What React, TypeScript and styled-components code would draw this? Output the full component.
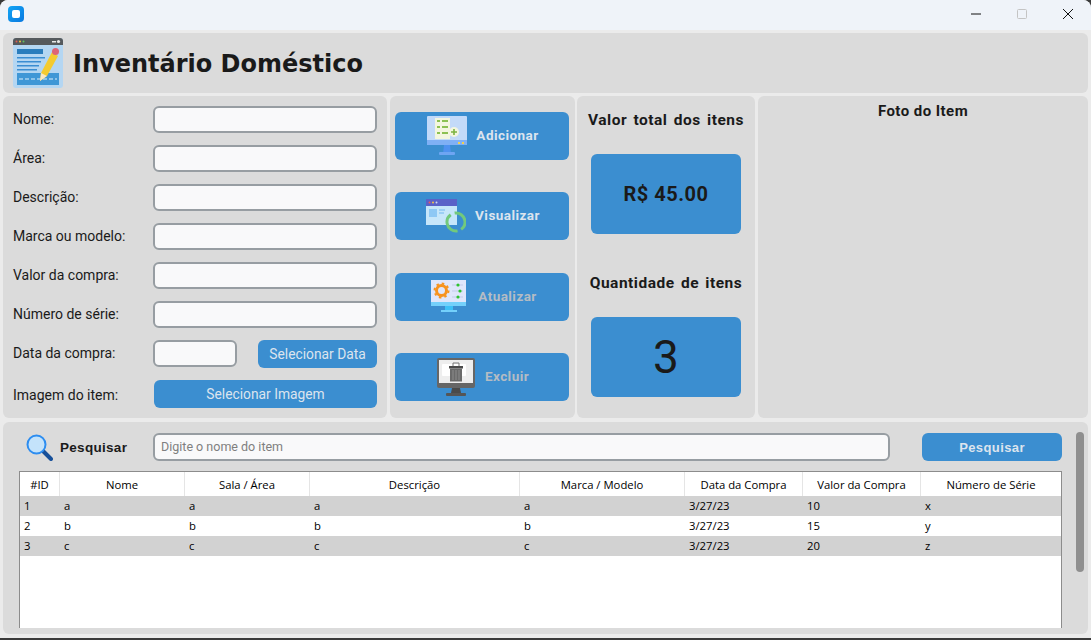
import styled, { createGlobalStyle } from 'styled-components'

const GlobalStyle = createGlobalStyle`
  html, body {
    margin: 0;
    height: 100%;
    overflow: hidden;
    background: #3a3a3a;
  }
  * {
    box-sizing: border-box;
  }
`

const Window = styled.div`
  width: 1091px;
  height: 638px;
  background: #ebebeb;
  border-radius: 8px 8px 0 0;
  display: flex;
  flex-direction: column;
  overflow: hidden;
`
const TitleBar = styled.div`
  height: 30px;
  flex: none;
  background: #eff3f9;
  display: flex;
  align-items: center;
  padding: 0 0 2px 8px;
`
const AppIcon = styled.div`
  width: 16px;
  height: 16px;
  border-radius: 4px;
  background: linear-gradient(135deg, #12a5f4, #0a78e0);
  display: flex;
  align-items: center;
  justify-content: center;
  &::after {
    content: '';
    width: 8px;
    height: 8px;
    border-radius: 2px;
    background: #fff;
  }
`
const WindowControls = styled.div`
  margin-left: auto;
  display: flex;
  height: 100%;
`
const WindowControl = styled.div`
  width: 46px;
  height: 100%;
  display: flex;
  align-items: center;
  justify-content: center;
`
const Content = styled.div`
  flex: 1;
  min-height: 0;
  padding: 3px 3px 4px;
  display: flex;
  flex-direction: column;
  gap: 3px;
`
const Panel = styled.div`
  background: #dbdbdb;
  border-radius: 6px;
`
const Header = styled(Panel)`
  height: 60px;
  flex: none;
  display: flex;
  align-items: center;
  padding-left: 10px;
  gap: 10px;
`
const Title = styled.h1`
  margin: 0;
  padding-top: 2px;
  font-family: 'DejaVu Sans', sans-serif;
  font-weight: 700;
  font-size: 24px;
  color: #1a1a1a;
`
const Middle = styled.div`
  height: 322px;
  flex: none;
  display: flex;
  gap: 3px;
`
const FormPanel = styled(Panel)`
  width: 384px;
  padding: 10px 10px 0;
  display: flex;
  flex-direction: column;
`
const FieldRow = styled.div`
  height: 26px;
  margin-bottom: 13px;
  display: flex;
  align-items: center;
`
const FieldLabel = styled.label`
  width: 140px;
  flex: none;
  font-family: Roboto, sans-serif;
  font-size: 14px;
  color: #1a1a1a;
`
const ImageLabel = styled(FieldLabel)`
  width: 141px;
  position: relative;
  top: 1px;
`
const TextInput = styled.input<{ $width?: number }>`
  width: ${p => p.$width ?? 224}px;
  height: 27px;
  background: #f9f9fa;
  border: 2px solid #979da2;
  border-radius: 6px;
  outline: none;
  font-family: Roboto, sans-serif;
  font-size: 14px;
  padding: 0 6px;
  &::placeholder {
    color: #7f7f7f;
  }
`
const BlueButton = styled.button<{ $width: number }>`
  width: ${p => p.$width}px;
  height: 28px;
  border: none;
  border-radius: 6px;
  background: #3b8ed0;
  color: #dce4ee;
  font-family: Roboto, sans-serif;
  font-size: 13.8px;
  padding: 0;
`
const DateButton = styled(BlueButton)`
  margin: 2px 0 0 21px;
`
const ImageRow = styled(FieldRow)`
  height: 28px;
  margin-top: 1px;
  margin-bottom: 0;
`
const ActionPanel = styled(Panel)`
  width: 185px;
  padding: 16px 6px 17px 5px;
  display: flex;
  flex-direction: column;
  justify-content: space-between;
`
const ActionButton = styled.button<{ $muted?: boolean; $gap: number; $shift: number }>`
  height: 48px;
  border: none;
  border-radius: 6px;
  background: #3b8ed0;
  color: ${p => (p.$muted ? '#b4bcc4' : '#dce4ee')};
  font-family: Roboto, sans-serif;
  font-weight: 700;
  font-size: 13.5px;
  letter-spacing: 0.45px;
  display: flex;
  align-items: center;
  justify-content: center;
  gap: ${p => p.$gap}px;
  padding: 0 0 0 ${p => p.$shift}px;
`
const ActionLabel = styled.span`
  margin-bottom: 2px;
`
const StatsPanel = styled(Panel)`
  width: 178px;
  margin-left: -1px;
  padding-top: 15px;
  display: flex;
  flex-direction: column;
  align-items: center;
`
const StatTitle = styled.div<{ $space: number }>`
  font-family: Roboto, sans-serif;
  font-weight: 700;
  font-size: 15.5px;
  line-height: 18px;
  letter-spacing: 0.5px;
  word-spacing: 2px;
  color: #1a1a1a;
  white-space: nowrap;
  margin-bottom: ${p => p.$space}px;
`
const StatBox = styled.div<{ $large?: boolean }>`
  width: 150px;
  height: 80px;
  flex: none;
  margin-bottom: 40px;
  border-radius: 6px;
  background: #3b8ed0;
  color: #1a1a1a;
  font-family: Roboto, sans-serif;
  font-weight: ${p => (p.$large ? 400 : 700)};
  font-size: ${p => (p.$large ? 46 : 20)}px;
  letter-spacing: ${p => (p.$large ? 0 : 0.5)}px;
  display: flex;
  align-items: center;
  justify-content: center;
`
const PhotoPanel = styled(Panel)`
  flex: 1;
  padding-top: 7px;
  text-align: center;
  font-family: Roboto, sans-serif;
  font-weight: 700;
  font-size: 15px;
  line-height: 16px;
  letter-spacing: 0.45px;
  color: #1a1a1a;
`
const BottomPanel = styled(Panel)`
  flex: 1;
  min-height: 0;
  margin-top: 1px;
  padding: 11px 0 0 16px;
  position: relative;
  overflow: hidden;
`
const SearchRow = styled.div`
  display: flex;
  align-items: center;
  height: 28px;
  margin-bottom: 10px;
  padding-left: 7px;
`
const SearchLabel = styled.span`
  font-family: 'Liberation Sans', sans-serif;
  font-weight: 700;
  font-size: 13.5px;
  letter-spacing: 0.3px;
  color: #1a1a1a;
  margin-left: 7px;
  width: 93px;
`
const SearchInput = styled(TextInput)`
  height: 28px;
  font-size: 12.5px;
  padding: 0 6px 2px;
`
const SearchButton = styled(BlueButton)`
  margin-left: 32px;
  font-family: 'Liberation Sans', sans-serif;
  font-weight: 700;
  font-size: 13px;
  letter-spacing: 0.4px;
`
const TableFrame = styled.div`
  width: 1043px;
  height: 157px;
  background: #fff;
  border: 1px solid #8c8c8c;
  border-bottom: none;
`
const DataTable = styled.table`
  width: 1041px;
  table-layout: fixed;
  border-collapse: separate;
  border-spacing: 0;
  font-family: 'Open Sans', sans-serif;
  font-size: 11.3px;
  color: #000;
`
const HeadCell = styled.th`
  height: 24px;
  padding: 0;
  font-weight: 400;
  text-align: center;
  border-right: 1px solid #e5e5e5;
  &:last-child {
    border-right: none;
  }
`
const BodyRow = styled.tr<{ $striped: boolean }>`
  background: ${p => (p.$striped ? '#d2d2d2' : '#fff')};
`
const BodyCell = styled.td`
  height: 20px;
  padding: 0 0 0 4px;
  line-height: 20px;
`
const ScrollThumb = styled.div`
  position: absolute;
  left: 1073px;
  top: 10px;
  width: 8px;
  height: 140px;
  border-radius: 4px;
  background: #8f8f8f;
`

const NoteIcon = () => (
  <svg width="50" height="50" viewBox="0 0 50 50">
    <rect width="50" height="50" rx="3" fill="#b4d6f2" />
    <path d="M0 7V3a3 3 0 0 1 3-3h44a3 3 0 0 1 3 3v4z" fill="#55595c" />
    <circle cx="3.5" cy="3.5" r="1" fill="#e05a4f" />
    <circle cx="7" cy="3.5" r="1" fill="#f3c63a" />
    <circle cx="10.5" cy="3.5" r="1" fill="#5fc15f" />
    <rect x="39" y="3" width="4" height="1.5" fill="#e8e8e8" />
    <circle cx="45.5" cy="3.5" r="1.6" fill="#e8e8e8" />
    <rect x="4" y="11" width="26" height="5" fill="#2a7dbd" />
    <rect x="4" y="19" width="28" height="1.5" fill="#3a8dd2" />
    <rect x="4" y="23" width="24" height="1.5" fill="#3a8dd2" />
    <rect x="4" y="27" width="22" height="1.5" fill="#3a8dd2" />
    <rect x="4" y="31" width="20" height="1.5" fill="#3a8dd2" />
    <rect x="4" y="35" width="42" height="12" fill="#3f97d6" />
    <path d="M6 41h38" stroke="#a7d2f0" strokeWidth="1.5" strokeDasharray="4 2" />
    <path d="M27 43l1-8L39 14l6 4L34 38z" fill="#f4cb2f" />
    <path d="M27 43l1-8 6 3z" fill="#f9e7c3" />
    <circle cx="42.5" cy="13.5" r="3.5" fill="#dd6477" />
  </svg>
)

const AddIcon = () => (
  <svg width="40" height="40" viewBox="0 0 40 40">
    <rect x="0" y="0" width="40" height="29" rx="1" fill="#c3daf9" />
    <rect x="0" y="24" width="40" height="5" fill="#7fb0f5" />
    <rect x="8" y="2" width="15" height="21" fill="#f3f6df" />
    <path d="M10 5h3M15 5h6M10 11h3M15 11h6M10 17h3M15 17h6" stroke="#8cc152" strokeWidth="2" />
    <circle cx="27" cy="16" r="5" fill="#f3f6df" />
    <path d="M27 13v6M24 16h6" stroke="#7cb342" strokeWidth="1.6" />
    <rect x="31" y="26" width="2" height="2" fill="#f2d04e" />
    <rect x="35" y="26" width="2" height="2" fill="#f2d04e" />
    <path d="M17 29h6l1 9h-8z" fill="#4f92f0" />
    <rect x="12" y="36" width="16" height="3" rx="1" fill="#6ea5f2" />
  </svg>
)

const ViewIcon = () => (
  <svg width="40" height="34" viewBox="0 0 40 34">
    <rect x="0" y="0" width="31" height="26" fill="#c6e6fa" />
    <rect x="0" y="0" width="31" height="7" fill="#5a62c8" />
    <circle cx="3.5" cy="3.5" r="1" fill="#ee5a5a" />
    <circle cx="7" cy="3.5" r="1" fill="#f6c344" />
    <circle cx="10.5" cy="3.5" r="1" fill="#cfd8f5" />
    <rect x="3" y="10" width="8" height="8" fill="#8ec8f4" />
    <path d="M13 11h6M13 14h5" stroke="#8ec8f4" strokeWidth="1.3" />
    <circle cx="30" cy="23" r="9" fill="none" stroke="#72c97c" strokeWidth="3" strokeDasharray="24 4.3" transform="rotate(80 30 23)" />
  </svg>
)

const UpdateIcon = () => (
  <svg width="38" height="33" viewBox="0 0 38 33">
    <rect x="0" y="0" width="35" height="26" fill="#dfe6fb" />
    <rect x="0" y="22" width="35" height="4" fill="#74d0fb" />
    <circle cx="10.5" cy="10.5" r="5" fill="none" stroke="#f7931e" strokeWidth="3" />
    <circle cx="10.5" cy="10.5" r="7" fill="none" stroke="#f7931e" strokeWidth="2" strokeDasharray="2.5 3" />
    <path d="M21 5h11M21 11h11M21 17h11" stroke="#c3cbea" strokeWidth="1" />
    <circle cx="27" cy="5" r="1.6" fill="#2fc42f" />
    <circle cx="29" cy="11" r="1.6" fill="#2fc42f" />
    <circle cx="27" cy="17" r="1.6" fill="#2fc42f" />
    <rect x="14" y="26" width="8" height="5" fill="#3dc0f7" />
    <rect x="10" y="30" width="16" height="2" fill="#74d0fb" />
  </svg>
)

const DeleteIcon = () => (
  <svg width="38" height="38" viewBox="0 0 38 38">
    <rect x="0" y="0" width="38" height="30" rx="2" fill="#666" />
    <rect x="2" y="2" width="34" height="23" fill="#eee" />
    <rect x="5" y="6" width="24" height="12" rx="1" fill="#fff" />
    <rect x="12" y="8" width="14" height="2.5" fill="#4a4a4a" />
    <path d="M16 8V5h6v3" fill="none" stroke="#777" strokeWidth="1" />
    <path d="M13 10.5h12v13H13z" fill="#6a6a6a" />
    <path d="M16 12v10M19 12v10M22 12v10" stroke="#8c8c8c" strokeWidth="1" />
    <path d="M15 30h8l1 5h-10z" fill="#4a4a4a" />
    <rect x="9" y="35" width="20" height="3" rx="1" fill="#555" />
  </svg>
)

const SearchIcon = () => (
  <svg width="27" height="27" viewBox="0 0 27 27">
    <path d="M17 17l8 8" stroke="#17509a" strokeWidth="4" strokeLinecap="round" />
    <circle cx="10.5" cy="10.5" r="9" fill="#c4e3fb" stroke="#2d8df0" strokeWidth="2" />
  </svg>
)

const columnWidths = [40, 125, 125, 210, 165, 118, 118, 140]
const columnNames = ['#ID', 'Nome', 'Sala / Área', 'Descrição', 'Marca / Modelo', 'Data da Compra', 'Valor da Compra', 'Número de Série']
const rows = [
  ['1', 'a', 'a', 'a', 'a', '3/27/23', '10', 'x'],
  ['2', 'b', 'b', 'b', 'b', '3/27/23', '15', 'y'],
  ['3', 'c', 'c', 'c', 'c', '3/27/23', '20', 'z']
]
const textFields = ['Nome:', 'Área:', 'Descrição:', 'Marca ou modelo:', 'Valor da compra:', 'Número de série:']

export default function App() {
  return (
    <Window>
      <GlobalStyle />
      <TitleBar>
        <AppIcon />
        <WindowControls>
          <WindowControl>
            <svg width="10" height="10" viewBox="0 0 10 10">
              <path d="M0 5h10" stroke="#111" strokeWidth="1" />
            </svg>
          </WindowControl>
          <WindowControl>
            <svg width="10" height="10" viewBox="0 0 10 10">
              <rect x="0.5" y="0.5" width="9" height="9" rx="1" fill="none" stroke="#c4c4c4" />
            </svg>
          </WindowControl>
          <WindowControl>
            <svg width="10" height="10" viewBox="0 0 10 10">
              <path d="M0 0l10 10M10 0L0 10" stroke="#111" strokeWidth="1" />
            </svg>
          </WindowControl>
        </WindowControls>
      </TitleBar>
      <Content>
        <Header>
          <NoteIcon />
          <Title>Inventário Doméstico</Title>
        </Header>
        <Middle>
          <FormPanel>
            {textFields.map(label => (
              <FieldRow key={label}>
                <FieldLabel>{label}</FieldLabel>
                <TextInput />
              </FieldRow>
            ))}
            <FieldRow>
              <FieldLabel>Data da compra:</FieldLabel>
              <TextInput $width={84} />
              <DateButton $width={120}>Selecionar Data</DateButton>
            </FieldRow>
            <ImageRow>
              <ImageLabel>Imagem do item:</ImageLabel>
              <BlueButton $width={224}>Selecionar Imagem</BlueButton>
            </ImageRow>
          </FormPanel>
          <ActionPanel>
            <ActionButton $gap={9} $shift={2}><AddIcon /><ActionLabel>Adicionar</ActionLabel></ActionButton>
            <ActionButton $gap={9} $shift={2}><ViewIcon /><ActionLabel>Visualizar</ActionLabel></ActionButton>
            <ActionButton $gap={9} $shift={4} $muted><UpdateIcon /><ActionLabel>Atualizar</ActionLabel></ActionButton>
            <ActionButton $gap={10} $shift={2} $muted><DeleteIcon /><ActionLabel>Excluir</ActionLabel></ActionButton>
          </ActionPanel>
          <StatsPanel>
            <StatTitle $space={25}>Valor total dos itens</StatTitle>
            <StatBox>R$ 45.00</StatBox>
            <StatTitle $space={25}>Quantidade de itens</StatTitle>
            <StatBox $large>3</StatBox>
          </StatsPanel>
          <PhotoPanel>Foto do Item</PhotoPanel>
        </Middle>
        <BottomPanel>
          <SearchRow>
            <SearchIcon />
            <SearchLabel>Pesquisar</SearchLabel>
            <SearchInput $width={737} placeholder="Digite o nome do item" />
            <SearchButton $width={140}>Pesquisar</SearchButton>
          </SearchRow>
          <TableFrame>
            <DataTable>
              <colgroup>
                {columnWidths.map((width, index) => (
                  <col key={index} width={width} />
                ))}
              </colgroup>
              <thead>
                <tr>
                  {columnNames.map(name => (
                    <HeadCell key={name}>{name}</HeadCell>
                  ))}
                </tr>
              </thead>
              <tbody>
                {rows.map((row, rowIndex) => (
                  <BodyRow key={row[0]} $striped={rowIndex % 2 === 0}>
                    {row.map((value, index) => (
                      <BodyCell key={index}>{value}</BodyCell>
                    ))}
                  </BodyRow>
                ))}
              </tbody>
            </DataTable>
          </TableFrame>
          <ScrollThumb />
        </BottomPanel>
      </Content>
    </Window>
  )
}
